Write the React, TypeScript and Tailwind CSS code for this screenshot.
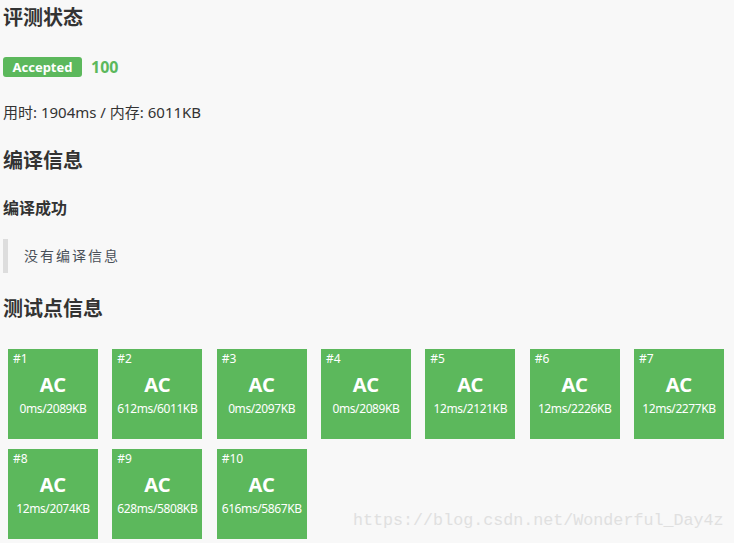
const cases = [
  { id: 1, time: "0ms", mem: "2089KB" },
  { id: 2, time: "612ms", mem: "6011KB" },
  { id: 3, time: "0ms", mem: "2097KB" },
  { id: 4, time: "0ms", mem: "2089KB" },
  { id: 5, time: "12ms", mem: "2121KB" },
  { id: 6, time: "12ms", mem: "2226KB" },
  { id: 7, time: "12ms", mem: "2277KB" },
  { id: 8, time: "12ms", mem: "2074KB" },
  { id: 9, time: "628ms", mem: "5808KB" },
  { id: 10, time: "616ms", mem: "5867KB" },
]

const sans = "font-['Noto_Sans','Noto_Sans_CJK_SC',sans-serif]"

export default function App() {
  return (
    <div className={`relative w-[734px] h-[543px] overflow-hidden bg-[#f8f8f8] text-[#333] ${sans}`}>
      <div className="px-[3px] pt-[3px]">
        {/* Status */}
        <h2 className="text-[20px] leading-[30px] font-bold">评测状态</h2>
        <div className="mt-[24px] flex items-center gap-[9px]">
          <span className="h-[20px] w-[79px] rounded-[3px] bg-[#5cb85c] text-white text-[13px] leading-[20px] font-bold text-center">
            Accepted
          </span>
          <span className="text-[16px] leading-[20px] font-bold text-[#5cb85c]">100</span>
        </div>
        <p className="mt-[25px] text-[15px] leading-[20px]">用时: 1904ms / 内存: 6011KB</p>

        {/* Compile */}
        <h2 className="mt-[24px] text-[20px] leading-[30px] font-bold">编译信息</h2>
        <h3 className="mt-[20px] text-[16px] leading-[24px] font-bold">编译成功</h3>
        <div className="mt-[19px] h-[34px] border-l-[5px] border-[#dddddd] pl-[16px] flex items-center pt-[2px]">
          <span className="font-['Liberation_Mono','Noto_Sans_CJK_SC',monospace] text-[14px] tracking-[2px] text-[#4a5059]">
            没有编译信息
          </span>
        </div>

        {/* Test cases */}
        <h2 className="mt-[21px] text-[20px] leading-[30px] font-bold">测试点信息</h2>
        <div className="mt-[25px] ml-[5px] flex flex-wrap gap-x-[14.33px] gap-y-[10px] w-[720px]">
          {cases.map((c) => (
            <div key={c.id} className="w-[90px] h-[90px] bg-[#5cb85c] text-white pt-[2px]">
              <div className="pl-[5px] text-[12px] leading-[16px]">#{c.id}</div>
              <div className="mt-[6px] text-center text-[20px] leading-[24px] font-bold">AC</div>
              <div className="mt-[4px] text-center text-[12px] leading-[16px] tracking-[-0.4px]">
                {c.time}/{c.mem}
              </div>
            </div>
          ))}
        </div>
      </div>

      {/* watermark */}
      <div className="absolute left-[353px] top-[511px] font-['Liberation_Mono',monospace] text-[16.7px] leading-[20px] text-[#e0e0e0]">
        https://blog.csdn.net/Wonderful_Day4z
      </div>
    </div>
  )
}
